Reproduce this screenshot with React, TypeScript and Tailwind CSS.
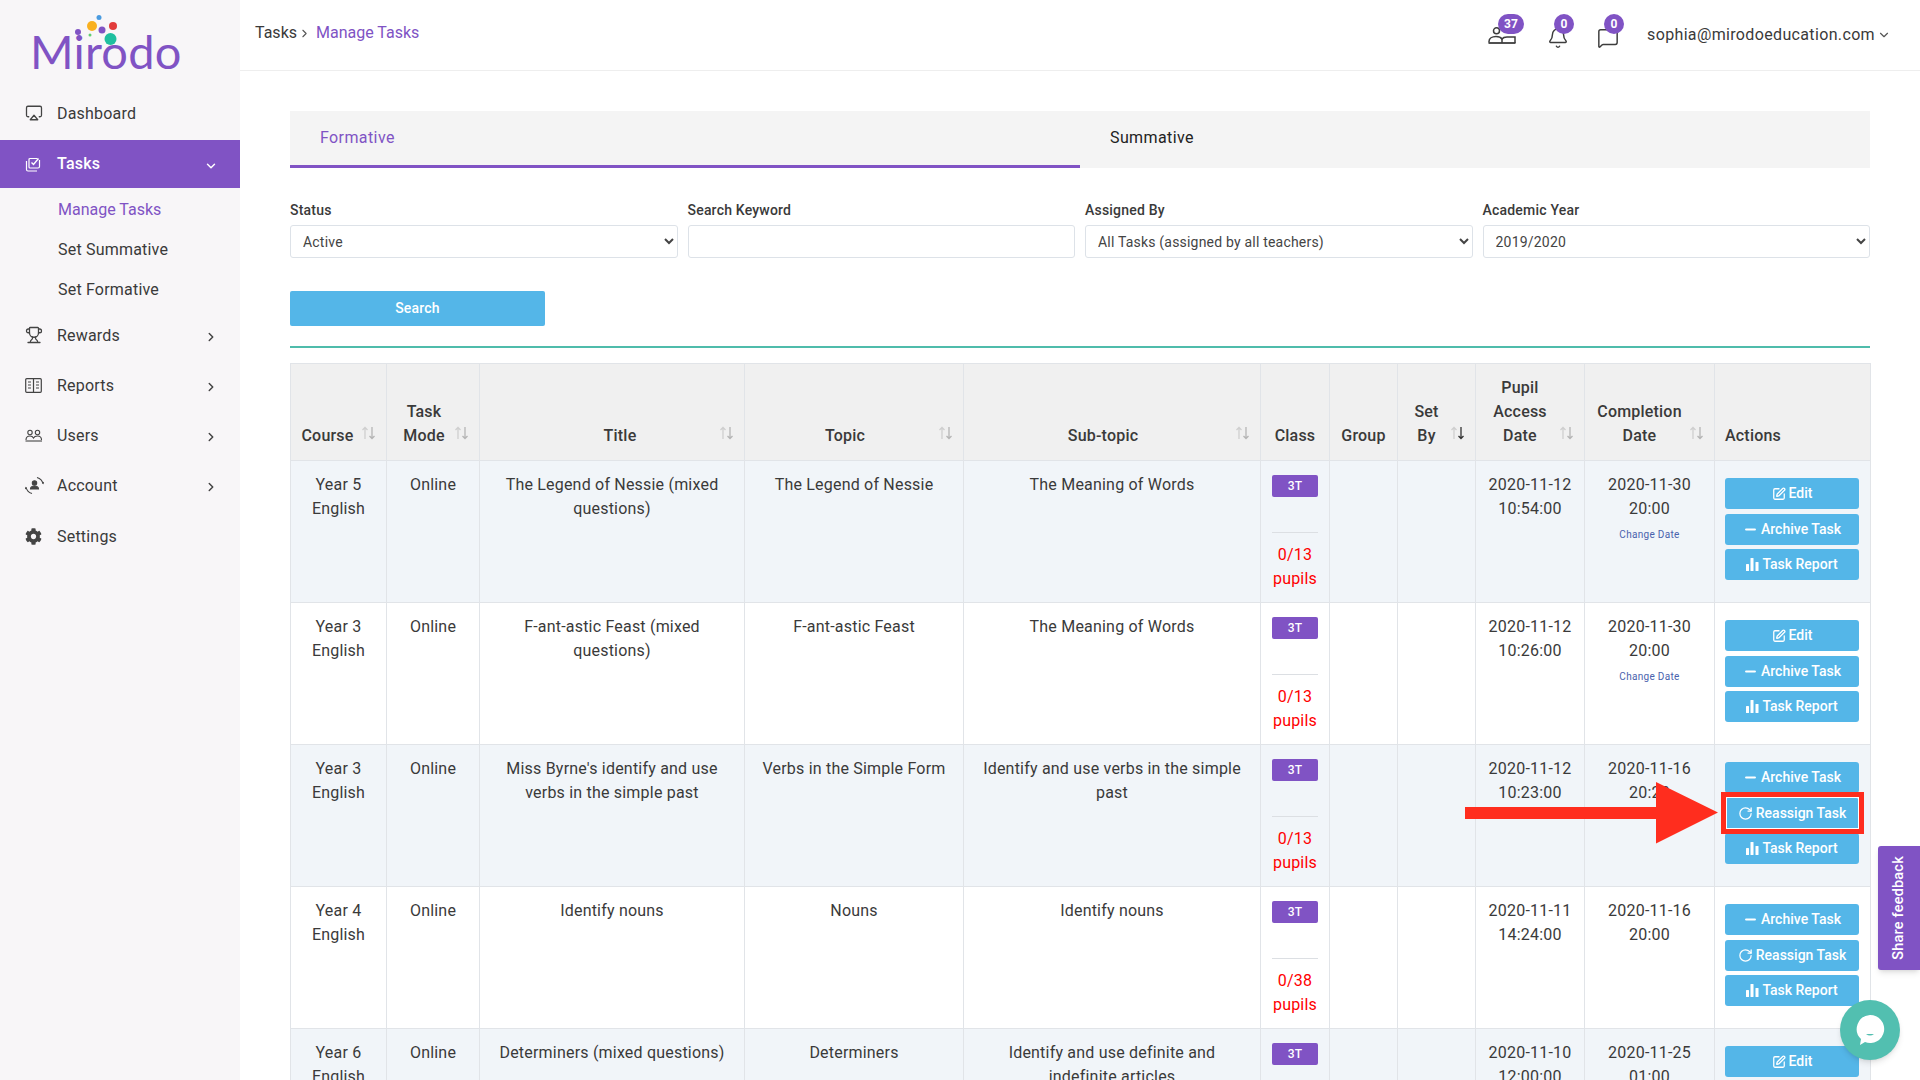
import { Airplay, Trophy, Bell, MessageSquare, ChevronDown, ChevronRight, SquarePen, Minus, RotateCw } from 'lucide-react';
import { FaCog } from 'react-icons/fa';

const font = { fontFamily: 'Roboto, "Liberation Sans", sans-serif' };

type Action = 'edit' | 'archive' | 'reassign' | 'report';

interface Row {
  course: string[];
  title: string;
  topic: string;
  sub: string;
  pupils: string;
  access: string[];
  completion: string[];
  changeDate?: boolean;
  actions: Action[];
}

const ROWS: Row[] = [
  { course: ['Year 5', 'English'], title: 'The Legend of Nessie (mixed questions)', topic: 'The Legend of Nessie', sub: 'The Meaning of Words', pupils: '0/13', access: ['2020-11-12', '10:54:00'], completion: ['2020-11-30', '20:00'], changeDate: true, actions: ['edit', 'archive', 'report'] },
  { course: ['Year 3', 'English'], title: 'F-ant-astic Feast (mixed questions)', topic: 'F-ant-astic Feast', sub: 'The Meaning of Words', pupils: '0/13', access: ['2020-11-12', '10:26:00'], completion: ['2020-11-30', '20:00'], changeDate: true, actions: ['edit', 'archive', 'report'] },
  { course: ['Year 3', 'English'], title: "Miss Byrne's identify and use verbs in the simple past", topic: 'Verbs in the Simple Form', sub: 'Identify and use verbs in the simple past', pupils: '0/13', access: ['2020-11-12', '10:23:00'], completion: ['2020-11-16', '20:23'], actions: ['archive', 'reassign', 'report'] },
  { course: ['Year 4', 'English'], title: 'Identify nouns', topic: 'Nouns', sub: 'Identify nouns', pupils: '0/38', access: ['2020-11-11', '14:24:00'], completion: ['2020-11-16', '20:00'], actions: ['archive', 'reassign', 'report'] },
  { course: ['Year 6', 'English'], title: 'Determiners (mixed questions)', topic: 'Determiners', sub: 'Identify and use definite and indefinite articles', pupils: '0/13', access: ['2020-11-10', '12:00:00'], completion: ['2020-11-25', '01:00'], actions: ['edit', 'archive', 'report'] },
];

function TasksIcon() {
  return (
    <svg width="16" height="16" viewBox="0 0 16 16" fill="none" stroke="currentColor" strokeWidth="1.2">
      <path d="M5 2.5h7.5M14.5 4v6.5a1.5 1.5 0 0 1-1.5 1.5H5a1 1 0 0 1-1-1V3.500a1 1 0 0 1 1-1" />
      <path d="M1.500 5v8.500a1.500 1.500 0 0 0 1.500 1.500h9" />
      <path d="M6.500 6.500l2 2 5-6" strokeWidth="1.4" />
    </svg>
  );
}

function ReportsIcon() {
  return (
    <svg width="17" height="15" viewBox="0 0 17 15" fill="none" stroke="currentColor" strokeWidth="1.200">
      <rect x="0.700" y="0.700" width="15.600" height="13.600" rx="1" />
      <path d="M8.500 1v13" />
      <path d="M3 4h3M3 7h3M3 10h3M11 4h3M11 7h3M11 10h3" />
    </svg>
  );
}

function UsersIcon() {
  return (
    <svg width="18" height="13" viewBox="0 0 18 13" fill="none" stroke="currentColor" strokeWidth="1.100">
      <circle cx="5" cy="3.500" r="2.200" />
      <circle cx="12.500" cy="3.500" r="2.200" />
      <path d="M1 11c0-3 2-4 4-4 1.600 0 2.800.6 3.500 2 .7-1.400 2-2 4-2 2.400 0 4 1 4 4" />
      <path d="M.500 12h16.500" />
    </svg>
  );
}

function AccountIcon() {
  return (
    <svg width="19" height="19" viewBox="0 0 19 19" fill="none" stroke="currentColor" strokeWidth="1.100">
      <circle cx="9.500" cy="7" r="2.200" fill="currentColor" />
      <path d="M5.500 13c0-2 2-3 4-3s4 1 4 3z" fill="currentColor" />
      <path d="M12 1.500c3.500 1 5.500 3.500 6 6.500M7 17.500c-3.500-1-5.500-3.500-6-6.500M1 11l-.500 2M18 8l.500-2" />
    </svg>
  );
}

function BarsIcon() {
  return (
    <svg width="13" height="13" viewBox="0 0 13 13" fill="currentColor">
      <rect x="0" y="6" width="3" height="7" rx="0.500" />
      <rect x="4.500" y="0" width="3" height="13" rx="0.500" />
      <rect x="9.500" y="4" width="3" height="9" rx="0.500" />
    </svg>
  );
}

function TeacherIcon() {
  return (
    <svg width="28" height="17" viewBox="0 0 28 17" fill="none" stroke="#3d3d3d" strokeWidth="1.500">
      <circle cx="8.500" cy="3.800" r="3" />
      <path d="M1 15.500v-1c0-3 3-5 7-5 3 0 5 1 6 2.500 1-1.500 3-2 5-2h8v6" />
      <path d="M0.500 16h27" strokeWidth="1.800" />
      <path d="M14 12v4" />
    </svg>
  );
}

function Logo() {
  return (
    <div className="relative h-[88px] w-full">
      <svg className="absolute left-0 top-0" width="240" height="88" viewBox="0 0 240 88">
        <circle cx="99" cy="17.500" r="2.500" fill="#4a9be0" />
        <circle cx="92" cy="26" r="5" fill="#f9b020" />
        <circle cx="113" cy="26" r="4" fill="#e23c3c" />
        <circle cx="102" cy="30" r="3.500" fill="#8053c4" />
        <circle cx="78" cy="32" r="3" fill="#8053c4" />
        <circle cx="90" cy="35" r="1.500" fill="#5fcf70" />
        <circle cx="110.500" cy="39" r="6" fill="#1fbf9f" />
      </svg>
      <span className="absolute left-[30px] top-[21px] text-[47px] leading-[60px] text-[#8053c4]" style={{ fontFamily: 'Lato, sans-serif' }}>Mirodo</span>
    </div>
  );
}

function NavItem({ icon, label, chevron = true }: { icon: React.ReactNode; label: string; chevron?: boolean }) {
  return (
    <div className="flex h-[50px] items-center pl-[25px] pr-[22px] text-[#3a3a3a]">
      <span className="flex w-[32px] shrink-0 items-center text-[#444]">{icon}</span>
      <span className="flex-1 translate-y-[1px] text-[16px]">{label}</span>
      {chevron && <ChevronRight className="mt-1 h-[14px] w-[14px] text-[#444]" strokeWidth={2.500} />}
    </div>
  );
}

function Sidebar() {
  return (
    <aside className="h-full w-[240px] shrink-0 bg-[#f8f6f8]">
      <Logo />
      <NavItem icon={<Airplay className="h-[18px] w-[18px]" strokeWidth={1.700} />} label="Dashboard" chevron={false} />
      <div className="mt-[2px] flex h-[48px] items-center bg-[#8053c4] pl-[25px] pr-[22px] text-white">
        <span className="flex w-[32px] shrink-0 items-center"><TasksIcon /></span>
        <span className="flex-1 text-[16px] font-medium">Tasks</span>
        <ChevronDown className="mt-1 h-[14px] w-[14px]" strokeWidth={2.500} />
      </div>
      <div className="mt-[2px] pl-[58px] text-[16px] text-[#3a3a3a]">
        <div className="flex h-[40px] items-center tracking-normal text-[#8053c4]">Manage Tasks</div>
        <div className="flex h-[40px] items-center">Set Summative</div>
        <div className="flex h-[40px] items-center">Set Formative</div>
      </div>
      <div>
        <NavItem icon={<Trophy className="h-[18px] w-[18px]" strokeWidth={1.700} />} label="Rewards" />
        <NavItem icon={<ReportsIcon />} label="Reports" />
        <NavItem icon={<UsersIcon />} label="Users" />
        <NavItem icon={<AccountIcon />} label="Account" />
        <div className="mt-[1px]">
          <NavItem icon={<FaCog className="h-[17px] w-[17px]" />} label="Settings" chevron={false} />
        </div>
      </div>
    </aside>
  );
}

function Badge({ children, className }: { children: React.ReactNode; className: string }) {
  return (
    <span className={`absolute top-[-1px] flex h-[20px] items-center justify-center rounded-full bg-[#8053c4] text-[12px] font-bold text-white ${className}`}>
      {children}
    </span>
  );
}

function TopBar() {
  return (
    <header className="flex h-[71px] shrink-0 items-center border-b border-[#eeeeee] pl-[15px] pr-[29px]">
      <div className="flex -translate-y-[2px] items-center text-[16px] tracking-normal">
        <span className="text-[#3a3a3a]">Tasks</span>
        <ChevronRight className="ml-[1px] mr-[5px] h-[13px] w-[13px] text-[#555]" strokeWidth={2} />
        <span className="text-[#8053c4]">Manage Tasks</span>
      </div>
      <div className="ml-auto flex items-center">
        <div className="relative mr-[29px] h-[30px] w-[30px] -translate-y-[5px] pt-[12px]">
          <TeacherIcon />
          <Badge className="left-[10px] w-[26px]">37</Badge>
        </div>
        <div className="relative mr-[28px] h-[30px] w-[22px] -translate-y-[5px] pt-[12px]">
          <Bell className="h-[22px] w-[22px] text-[#3d3d3d]" strokeWidth={1.600} />
          <Badge className="left-[7px] w-[20px]">0</Badge>
        </div>
        <div className="relative mr-[28px] h-[30px] w-[22px] -translate-y-[5px] pt-[12px]">
          <MessageSquare className="h-[22px] w-[22px] text-[#3d3d3d]" strokeWidth={1.600} />
          <Badge className="left-[7px] w-[20px]">0</Badge>
        </div>
        <span className="text-[16px] tracking-[0.35px] text-[#3a3a3a]">sophia@mirodoeducation.com</span>
        <ChevronDown className="ml-[2px] h-[14px] w-[14px] text-[#555]" strokeWidth={2} />
      </div>
    </header>
  );
}

function Filter({ label, children }: { label: string; children: React.ReactNode }) {
  return (
    <div>
      <label className="mb-[5px] block text-[14px] font-medium leading-[20px] text-[#3a3a3a]">{label}</label>
      {children}
    </div>
  );
}

const fieldCls = 'h-[33px] w-full rounded-[3px] border border-[#dde2e8] bg-white pl-[8px] text-[14px] tracking-[0.2px] text-[#444]';

function Sort({ dark }: { dark?: boolean }) {
  return (
    <svg className="absolute bottom-[20px] right-[10px]" width="15" height="14" viewBox="0 0 15 14" fill="none" strokeWidth="1.300">
      <path d="M4 13V1.500M1.500 4L4 1.500 6.500 4" stroke="#cfcfcf" />
      <path d="M11 1v11.500M8.500 10l2.500 2.500 2.500-2.500" stroke={dark ? '#333' : '#b5b5b5'} />
    </svg>
  );
}

const thCls = 'relative border border-[#e1e4e8] bg-[#f0f0f0] pb-[12px] pt-[5px] align-bottom text-[16px] font-medium leading-[24px] text-[#3a3a3a]';
const tdCls = 'border border-[#e1e4e8] px-[12px] py-[12px] align-top text-center text-[16px] leading-[24px] text-[#3a3a3a]';

function ActionButton({ kind }: { kind: Action }) {
  const content = {
    edit: { icon: <SquarePen className="h-[14px] w-[14px]" strokeWidth={2.200} />, label: 'Edit' },
    archive: { icon: <Minus className="h-[15px] w-[15px]" strokeWidth={3.500} />, label: 'Archive Task' },
    reassign: { icon: <RotateCw className="h-[15px] w-[15px]" strokeWidth={2} />, label: 'Reassign Task' },
    report: { icon: <BarsIcon />, label: 'Task Report' },
  }[kind];
  return (
    <div className="flex h-[31px] items-center justify-center gap-[3px] rounded-[3px] bg-[#54b6e8] text-[14px] font-medium tracking-normal text-white">
      {content.icon}
      {content.label}
    </div>
  );
}

function TaskRow({ row, index }: { row: Row; index: number }) {
  const bg = index % 2 === 0 ? 'bg-[#f1f5f9]' : 'bg-white';
  return (
    <tr className={`h-[142px] ${bg}`}>
      <td className={tdCls}>{row.course.map((c) => <div key={c}>{c}</div>)}</td>
      <td className={tdCls}>Online</td>
      <td className={tdCls}>{row.title}</td>
      <td className={tdCls}>{row.topic}</td>
      <td className={`${tdCls} !px-[14px]`}>{row.sub}</td>
      <td className={`${tdCls} !px-[11px] !pb-[6px]`}>
        <div className="mb-[35px] mt-[2px] flex h-[22px] items-center justify-center rounded-[2px] bg-[#8053c4] text-[12px] font-medium text-white">3T</div>
        <div className="border-t border-[#dcdfe3] pt-[10px] text-[#ff0000]">
          <div>{row.pupils}</div>
          <div>pupils</div>
        </div>
      </td>
      <td className={tdCls} />
      <td className={tdCls} />
      <td className={tdCls}>{row.access.map((c) => <div key={c}>{c}</div>)}</td>
      <td className={tdCls}>
        {row.completion.map((c) => <div key={c}>{c}</div>)}
        {row.changeDate && <div className="mt-[7px] text-[10px] leading-[14px] tracking-[0.3px] text-[#4a62ad]">Change Date</div>}
      </td>
      <td className="border border-[#e1e4e8] pb-[12px] pl-[10px] pr-[11px] pt-[17px] align-top">
        <div className="flex flex-col gap-[4.500px]">
          {row.actions.map((a) => <ActionButton key={a} kind={a} />)}
        </div>
      </td>
    </tr>
  );
}

function TaskTable() {
  return (
    <table className="w-[1580px] table-fixed border-collapse">
      <colgroup>
        <col className="w-[96px]" />
        <col className="w-[93px]" />
        <col className="w-[265px]" />
        <col className="w-[219px]" />
        <col className="w-[297px]" />
        <col className="w-[69px]" />
        <col className="w-[68px]" />
        <col className="w-[78px]" />
        <col className="w-[109px]" />
        <col className="w-[130px]" />
        <col className="w-[156px]" />
      </colgroup>
      <thead>
        <tr className="h-[97px]">
          <th className={`${thCls} pl-[8px] pr-[30px]`}>Course<Sort /></th>
          <th className={`${thCls} pl-[12px] pr-[30px]`}>Task<br />Mode<Sort /></th>
          <th className={`${thCls} pl-[30px] pr-[14px]`}>Title<Sort /></th>
          <th className={`${thCls} pl-[12px] pr-[30px]`}>Topic<Sort /></th>
          <th className={`${thCls} pl-[12px] pr-[30px]`}>Sub-topic<Sort /></th>
          <th className={thCls}>Class</th>
          <th className={thCls}>Group</th>
          <th className={`${thCls} pl-[8px] pr-[28px]`}>Set<br />By<Sort dark /></th>
          <th className={`${thCls} pl-[8px] pr-[28px]`}>Pupil<br />Access<br />Date<Sort /></th>
          <th className={`${thCls} pl-[8px] pr-[28px]`}>Completion<br />Date<Sort /></th>
          <th className={`${thCls} pl-[10px] text-left`}>Actions</th>
        </tr>
      </thead>
      <tbody>
        {ROWS.map((r, i) => <TaskRow key={r.title} row={r} index={i} />)}
      </tbody>
    </table>
  );
}

export default function App() {
  return (
    <div className="relative flex h-[1080px] w-[1920px] overflow-hidden bg-white tracking-[0.2px]" style={font}>
      <Sidebar />
      <div className="flex min-w-0 flex-1 flex-col">
        <TopBar />
        <main className="px-[50px] pt-[40px]">
          <div className="grid h-[57px] grid-cols-2 bg-[#f4f4f4] text-[16px] tracking-[0.4px]">
            <div className="flex items-center border-b-[3px] border-[#8053c4] pl-[30px] text-[#8053c4]">Formative</div>
            <div className="flex items-center border-b-[3px] border-transparent pl-[30px] text-[#222]">Summative</div>
          </div>
          <div className="mt-[32px] grid grid-cols-4 gap-x-[10px]">
            <Filter label="Status">
              <select className={fieldCls} defaultValue="Active"><option>Active</option></select>
            </Filter>
            <Filter label="Search Keyword">
              <input className={fieldCls} />
            </Filter>
            <Filter label="Assigned By">
              <select className={fieldCls}><option>All Tasks (assigned by all teachers)</option></select>
            </Filter>
            <Filter label="Academic Year">
              <select className={fieldCls}><option>2019/2020</option></select>
            </Filter>
          </div>
          <button type="button" className="mt-[33px] block h-[35px] w-[255px] rounded-[2px] bg-[#54b6e8] text-[14px] font-medium text-white">Search</button>
          <div className="mb-[15px] mt-[20px] h-[2px] bg-[#4fbcab]" />
          <TaskTable />
        </main>
      </div>

      {/* red annotation over the third row */}
      <svg className="absolute left-[1465px] top-[782px]" width="253" height="62" viewBox="0 0 253 62">
        <path d="M0 25h191V0l62 30.500-62 31V37H0z" fill="#ff2d1e" />
      </svg>
      <div className="absolute left-[1721px] top-[792px] h-[42px] w-[143px] border-[5px] border-[#ff2d1e]">
        <div className="h-full w-full border border-white" />
      </div>

      <div className="absolute left-[1878px] top-[846px] flex h-[124px] w-[42px] items-center justify-center rounded-l-[3px] bg-[#8053c4] shadow-md">
        <span className="-rotate-90 whitespace-nowrap text-[14.500px] font-medium text-white">Share feedback</span>
      </div>
      <div className="absolute left-[1840px] top-[1000px] flex h-[60px] w-[60px] items-center justify-center rounded-full bg-[#52bfb0] shadow-md">
        <svg width="30" height="32" viewBox="0 0 30 32">
          <path d="M15 1a14 14 0 1 1-5 27l-5 3 1-6A14 14 0 0 1 15 1z" fill="#fff" />
          <path d="M11 20q4 3 8 0z" fill="#52bfb0" />
        </svg>
      </div>
    </div>
  );
}
